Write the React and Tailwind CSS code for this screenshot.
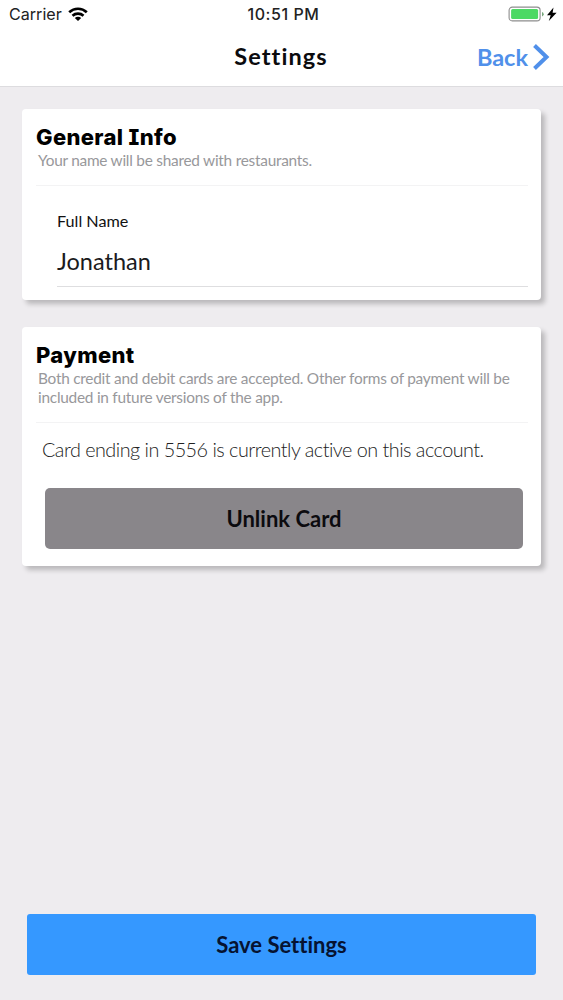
import React from "react";

const StatusBar = () => {
  return (
    <div className="grid grid-cols-3 items-center h-7 pl-[9px] pr-[5px] font-['Inter',sans-serif] text-[16px] leading-7 text-[#222]">
      {/* Left: carrier + wifi */}
      <div className="flex items-center gap-[6px]">
        <span className="text-[16.1px] leading-[26px]">Carrier</span>
        <svg width="20" height="15" viewBox="0 0 20 15" fill="none" stroke="#000" strokeWidth="2.7">
          <path d="M1.2 5.2C6.2 .6 13.8 .6 18.8 5.2" />
          <path d="M4.5 8.7C7.6 5.9 12.4 5.9 15.5 8.7" />
          <path d="M10 14L6.8 11C8.6 9.4 11.4 9.4 13.2 11Z" fill="#000" stroke="none" />
        </svg>
      </div>

      {/* Center: clock */}
      <span className="text-center font-medium text-[16px] tracking-[0.55px] whitespace-nowrap">10:51 PM</span>

      {/* Right: battery */}
      <div className="flex items-center justify-end">
        <svg width="50" height="18" viewBox="0 0 50 18">
          <rect x="1.1" y="2.1" width="31" height="13.8" rx="3.2" fill="#fff" stroke="#8d8d8d" strokeWidth="1.1" />
          <rect x="3.1" y="4.1" width="27" height="9.8" rx="1.5" fill="#4cd964" />
          <path d="M34 7V11.5Q35.7 10.8 35.7 9.2T34 7Z" fill="#77a77c" />
          <path d="M45.5 2.5L39 10.2H42.7L40.8 16L48.6 7.8H44.6Z" fill="#000" />
        </svg>
      </div>
    </div>
  );
};

const NavBar = () => {
  return (
    <header className="h-[87px] bg-white border-b border-[#dddcdf]">
      <StatusBar />
      <div className="grid grid-cols-[1fr_auto_1fr] items-center h-[58px] pr-[13px]">
        <span></span>
        <h1 className="pl-[12px] text-[23.5px] font-bold tracking-[1.1px] text-[#0b0b0e]">Settings</h1>
        <button className="flex items-center justify-end gap-1 text-[#5090ea]">
          <span className="pt-px text-[23.5px] font-bold">Back</span>
          <svg width="18" height="28" viewBox="0 0 18 28" fill="none" stroke="currentColor" strokeWidth="4">
            <path d="M2.5 2.5L14.5 14L2.5 25.5" />
          </svg>
        </button>
      </div>
    </header>
  );
};

const Card = ({ title, description, children, className }) => {
  return (
    <section className={`rounded-[4px] bg-white pl-[14px] pr-[13px] shadow-[4px_4px_5px_rgba(0,0,0,0.22)] ${className}`}>
      <div className="border-b border-[#f3f3f4] pt-[14px] pb-[15px]">
        <h2 className="font-['Inter',sans-serif] text-[22px] leading-[28px] font-extrabold tracking-[0.35px] text-black [font-feature-settings:'cv08']">
          {title}
        </h2>
        <p className="pl-[2px] text-[15.4px] leading-[19px] tracking-[-0.25px] text-[#98989b]">{description}</p>
      </div>
      {children}
    </section>
  );
};

const App = () => {
  return (
    <div className="flex flex-col h-[1000px] bg-[#eeecef] font-['Lato',sans-serif] [font-variant-ligatures:none]">
      <NavBar />

      <main className="flex flex-col flex-1 gap-[27px] pt-[22px] px-[22px]">
        <Card title="General Info" description="Your name will be shared with restaurants." className="h-[191px]">
          <div className="ml-[21px] pt-[22px]">
            <label className="block text-[16.2px] leading-[26px] text-[#111]">Full Name</label>
            <div className="h-[53px] border-b border-[#dedee0] pt-[12px] text-[23.5px] leading-[30px] text-[#1b1b1d]">Jonathan</div>
          </div>
        </Card>

        <Card
          title="Payment"
          description="Both credit and debit cards are accepted. Other forms of payment will be included in future versions of the app."
          className="h-[239px]"
        >
          <p className="pl-[6px] pt-[11px] text-[19.8px] leading-[30px] font-light tracking-[-0.5px] text-[#222] whitespace-nowrap">
            Card ending in 5556 is currently active on this account.
          </p>
          <button className="mt-[24px] ml-[9px] w-[478px] h-[61px] rounded-[5px] bg-[#89868a] text-[22px] font-bold text-[#0c0b0f]">
            Unlink Card
          </button>
        </Card>
      </main>

      {/* Bottom action */}
      <footer className="pl-[27px] pr-[27px] pb-[25px]">
        <button className="w-full h-[61px] rounded-[3px] bg-[#3598ff] text-[22px] font-bold text-[#061331]">Save Settings</button>
      </footer>
    </div>
  );
};

export default App;
